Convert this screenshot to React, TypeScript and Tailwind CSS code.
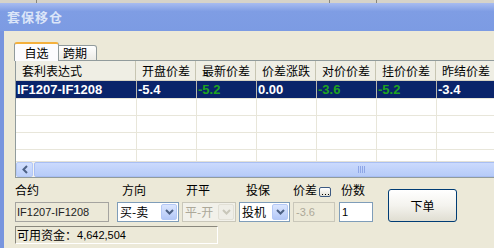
import React from 'react';

const headers = ['套利表达式', '开盘价差', '最新价差', '价差涨跌', '对价价差', '挂价价差', '昨结价差'];

const row = [
  { text: 'IF1207-IF1208', green: false },
  { text: '-5.4', green: false },
  { text: '-5.2', green: true },
  { text: '0.00', green: false },
  { text: '-3.6', green: true },
  { text: '-5.2', green: true },
  { text: '-3.4', green: false },
];

const colWidth = (i: number) => (i === 0 ? 'w-[120px]' : 'w-[60px]');

const Chevron = ({ disabled }: { disabled?: boolean }) => (
  <svg width="9" height="6" viewBox="0 0 9 6">
    <path d="M1 1 L4.5 4.5 L8 1" fill="none" stroke={disabled ? '#c9c7ba' : '#4d6185'} strokeWidth="2" />
  </svg>
);

const Combo = ({ text, width, disabled }: { text: string; width: string; disabled?: boolean }) => (
  <div
    className={`${width} h-[20px] border flex items-center justify-between pl-[2px] ${
      disabled ? 'border-[#c9c7ba] bg-[#f2f1ea] text-[#aca899]' : 'border-[#7f9db9] bg-white text-black'
    }`}
  >
    <span className="leading-none">{text}</span>
    <div
      className={`w-[16px] h-[16px] mr-[1px] rounded-[2px] border flex items-center justify-center ${
        disabled ? 'border-[#e2e0d6] bg-[#efeee7]' : 'border-[#b4c8f6] bg-gradient-to-b from-[#dbe6fe] to-[#b4c8f7]'
      }`}
    >
      <Chevron disabled={disabled} />
    </div>
  </div>
);

export default function App() {
  return (
    <div className="w-[494px] h-[248px] overflow-hidden flex flex-col bg-[#ece9d8] font-['Noto_Sans_CJK_SC',sans-serif] text-[12px] text-black">
      {/* strip of the window behind */}
      <div className="h-[3px] shrink-0 flex bg-[#d6d3c9]">
        <div className="w-[37px] border-r border-[#8a877c]" />
        <div className="w-[293px] border-r border-[#8a877c]" />
        <div className="w-[47px] border-r border-[#8a877c]" />
      </div>

      {/* Title bar */}
      <div className="h-[28px] shrink-0 flex items-center pl-[7px] bg-gradient-to-b from-[#a8bcf0] via-[#7f9de4] via-30% to-[#7c9be3]">
        <span className="text-[13px] font-bold text-[#dbe5f8] tracking-[1px]">套保移仓</span>
      </div>

      <div className="flex-1 flex">
        {/* left frame */}
        <div className="w-[4px] shrink-0 bg-[#7895de]" />

        <div className="flex-1 flex flex-col min-w-0">
          {/* Tabs */}
          <div className="mt-[11px] pl-[10px] h-[19px] flex items-end relative z-10">
            <div className="w-[45px] h-[19px] bg-[#fcfcfe] border border-b-0 border-[#919b9c] border-t-2 border-t-[#f4b13d] rounded-t-[3px] flex items-center justify-center">
              自选
            </div>
            <div className="w-[38px] h-[16px] border border-l-0 border-b border-[#919b9c] rounded-tr-[3px] bg-gradient-to-b from-white to-[#ecebe5] flex items-center pl-[4px]">
              跨期
            </div>
          </div>

          {/* Grid */}
          <div className="ml-[11px] -mt-[1px] h-[118px] border border-r-0 border-[#919b9c] flex flex-col overflow-hidden bg-white">
            <div className="h-[20px] shrink-0 flex bg-[#efeee4] border-b border-[#d6d2c2]">
              {headers.map((h, i) => (
                <div
                  key={h}
                  className={`${colWidth(i)} shrink-0 border-r border-[#c7c5b2] flex items-center pl-[6px]`}
                >
                  {h}
                </div>
              ))}
            </div>
            <div className="h-[80px] shrink-0 overflow-hidden flex flex-col">
              <div className="h-[17px] shrink-0 flex bg-[#0a246a] font-['Liberation_Sans',sans-serif] font-bold text-[13px]">
                {row.map((c, i) => (
                  <div
                    key={i}
                    className={`${colWidth(i)} shrink-0 flex items-center pl-[1px] ${i > 0 ? 'border-l border-[#b8b6ac]' : ''} ${
                      c.green ? 'text-[#1fa31f]' : 'text-white'
                    }`}
                  >
                    {c.text}
                  </div>
                ))}
              </div>
              {[0, 1, 2, 3].map((r) => (
                <div key={r} className="h-[17px] shrink-0 flex border-t border-[#e8e6da]">
                  {headers.map((h, i) => (
                    <div key={h} className={`${colWidth(i)} shrink-0 ${i > 0 ? 'border-l border-[#e8e6da]' : ''}`} />
                  ))}
                </div>
              ))}
            </div>
            {/* Horizontal scrollbar */}
            <div className="h-[16px] shrink-0 flex bg-[#f4f3ee] border-t border-[#e3e1d7]">
              <div className="w-[17px] h-full shrink-0 rounded-[2px] border border-[#b4c8f6] bg-gradient-to-b from-[#d3e0fe] to-[#bccff9] flex items-center justify-center">
                <svg width="6" height="9" viewBox="0 0 6 9">
                  <path d="M5 1 L1.5 4.5 L5 8" fill="none" stroke="#4d6185" strokeWidth="2" />
                </svg>
              </div>
              <div className="ml-[1px] w-[654px] h-full shrink-0 rounded-[2px] border border-[#a8bef3] bg-gradient-to-b from-[#cbdafd] to-[#b6cbf8] flex items-center justify-center gap-[1px]">
                {[0, 1, 2, 3].map((k) => (
                  <div key={k} className="w-[1px] h-[7px] bg-[#8ea6e6]" />
                ))}
              </div>
            </div>
          </div>

          {/* Order controls */}
          <div className="ml-[11px] flex items-start">
            <div className="w-[94px] flex flex-col">
              <div className="h-[24px] flex items-center">合约</div>
              <div className="h-[20px] border border-[#a5a4a0] bg-[#ece9d8] flex items-center pl-[1px] font-['Liberation_Sans',sans-serif] text-[11px] text-[#222]">
                IF1207-IF1208
              </div>
            </div>
            <div className="ml-[8px] flex flex-col">
              <div className="h-[24px] flex items-center pl-[5px]">方向</div>
              <Combo text="买-卖" width="w-[62px]" />
            </div>
            <div className="ml-[3px] flex flex-col">
              <div className="h-[24px] flex items-center pl-[4px]">开平</div>
              <Combo text="平-开" width="w-[54px]" disabled />
            </div>
            <div className="ml-[3px] flex flex-col">
              <div className="h-[24px] flex items-center pl-[7px]">投保</div>
              <Combo text="投机" width="w-[51px]" />
            </div>
            <div className="ml-[3px] flex flex-col">
              <div className="h-[24px] flex items-center gap-[2px]">
                <span>价差</span>
                <div className="mt-[4px] w-[12px] h-[10px] rounded-[2px] border border-[#3d5a82] bg-gradient-to-b from-white to-[#e3e1d6] flex items-end justify-center gap-[2px] pb-[1px]">
                  <div className="w-[1px] h-[1px] bg-black" />
                  <div className="w-[1px] h-[1px] bg-black" />
                  <div className="w-[1px] h-[1px] bg-black" />
                </div>
              </div>
              <div className="w-[42px] h-[20px] border border-[#c9c7ba] bg-[#ece9d8] flex items-center pl-[2px] font-['Liberation_Sans',sans-serif] text-[11px] text-[#aca899]">
                -3.6
              </div>
            </div>
            <div className="ml-[4px] flex flex-col">
              <div className="h-[24px] flex items-center pl-[2px]">份数</div>
              <div className="w-[34px] h-[20px] border border-[#7f9db9] bg-white flex items-center pl-[2px] font-['Liberation_Sans',sans-serif] text-[11px]">
                1
              </div>
            </div>
            <div className="ml-[15px] mt-[11px] w-[69px] h-[33px] rounded-[3px] border border-[#003c74] bg-gradient-to-b from-white via-[#f4f3ee] to-[#e0ded2] flex items-center justify-center">
              下单
            </div>
          </div>

          {/* Available funds */}
          <div className="ml-[11px] mt-[4px] w-[203px] h-[18px] border border-t-[#8a887d] border-l-[#8a887d] border-b-white border-r-white flex items-center pl-[1px]">
            <span>可用资金：</span>
            <span className="font-['Liberation_Sans',sans-serif] text-[11px]">4,642,504</span>
          </div>
        </div>
      </div>
    </div>
  );
}
